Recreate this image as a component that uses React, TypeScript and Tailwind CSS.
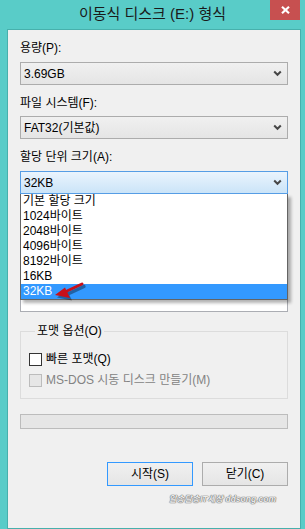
import React from 'react';

const font = { fontFamily: '"Liberation Sans", "Noto Sans CJK KR", sans-serif' };

const Chevron = () => (
  <svg width="9" height="7" viewBox="0 0 9 7" className="shrink-0">
    <path d="M1.2 1.5 L4.5 4.8 L7.8 1.5" fill="none" stroke="#474747" strokeWidth="2" />
  </svg>
);

const Combo = ({ value, focused }: { value: string; focused?: boolean }) => (
  <div
    className={`flex h-[23px] items-center justify-between border pl-[3px] pr-[5px] text-[12px] leading-[16px] ${
      focused
        ? 'border-[#569de5] bg-gradient-to-b from-[#eaf4fd] to-[#cbe4f8]'
        : 'border-[#acacac] bg-gradient-to-b from-[#f0f0f0] to-[#e5e5e5]'
    }`}
  >
    <span className="text-black">{value}</span>
    <Chevron />
  </div>
);

const options = ['기본 할당 크기', '1024바이트', '2048바이트', '4096바이트', '8192바이트', '16KB', '32KB'];

const App: React.FC = () => {
  return (
    <div className="flex h-[529px] w-[305px] flex-col overflow-hidden bg-[#59ccc8]" style={font}>
      {/* Title bar */}
      <div className="relative flex h-[29px] shrink-0 items-center justify-center">
        <span className="-mt-[1px] text-[15px] leading-[20px] text-[#1a1a1a]">이동식 디스크 (E:) 형식</span>
        <div className="absolute right-[5px] top-0 flex h-[20px] w-[30px] items-center justify-center bg-[#c75050]">
          <svg width="9" height="8" viewBox="0 0 9 8">
            <path d="M1 0.8 L8 7.2 M8 0.8 L1 7.2" stroke="white" strokeWidth="2.2" />
          </svg>
        </div>
      </div>

      {/* Client area */}
      <div className="ml-[7px] mr-[4px] flex flex-1 flex-col border border-[#47b0ac] bg-[#f0f0f0] px-[12px] pb-[7px] text-[12px] leading-[16px] text-black">
        <div className="mt-[10px]">용량(P):</div>
        <div className="mt-[6px]">
          <Combo value="3.69GB" />
        </div>

        <div className="mt-[10px]">파일 시스템(F):</div>
        <div className="mt-[5px]">
          <Combo value="FAT32(기본값)" />
        </div>

        <div className="mt-[10px]">할당 단위 크기(A):</div>
        <div className="relative z-10 mt-[6px]">
          <Combo value="32KB" focused />
          {/* Open list */}
          <div className="absolute left-0 right-0 top-full border border-t-0 border-[#646464] bg-white shadow-[3px_3px_3px_rgba(0,0,0,0.3)]">
            {options.map((o) => (
              <div
                key={o}
                className={`h-[15px] pl-[2px] leading-[15px] ${o === '32KB' ? 'bg-[#3399ff] text-white' : 'text-black'}`}
              >
                {o}
              </div>
            ))}
            <svg className="absolute left-[33px] top-[87px]" width="34" height="24" viewBox="0 0 34 24">
              <g transform="translate(2 2.5)" opacity="0.35">
                <path d="M13 10 L28 3" stroke="#000" strokeWidth="3.2" strokeLinecap="round" />
                <path d="M1 14 L11 6.5 L16 17 Z" fill="#000" />
              </g>
              <path d="M13 10 L28 3" stroke="#c8101a" strokeWidth="3" strokeLinecap="round" />
              <path d="M1 14 L11 6.5 L16 17 Z" fill="#c8101a" />
            </svg>
          </div>
        </div>

        {/* Volume label box, mostly hidden behind the list */}
        <div className="mt-[97px] h-[21px] border border-[#abadb3] bg-white" />

        {/* Format options */}
        <fieldset className="mt-[11px] border border-[#dcdcdc] pb-[10px] pl-[8px] pt-[12px]">
          <legend className="ml-[6px] px-[2px]">포맷 옵션(O)</legend>
          <div className="flex items-center gap-[4px]">
            <div className="h-[13px] w-[13px] border border-[#333] bg-white" />
            <span>빠른 포맷(Q)</span>
          </div>
          <div className="mt-[5px] flex items-center gap-[4px] text-[#838383]">
            <div className="h-[13px] w-[13px] border border-[#bcbcbc] bg-[#e6e6e6]" />
            <span>MS-DOS 시동 디스크 만들기(M)</span>
          </div>
        </fieldset>

        {/* Progress */}
        <div className="mt-[15px] h-[15px] border border-[#bcbcbc] bg-[#e6e6e6]" />

        {/* Buttons */}
        <div className="mt-[33px] flex justify-end gap-[9px]">
          <button className="flex h-[24px] w-[86px] items-center justify-center border border-[#3399ff] bg-gradient-to-b from-[#f0f0f0] to-[#e5e5e5]">
            시작(S)
          </button>
          <button className="flex h-[24px] w-[86px] items-center justify-center border border-[#acacac] bg-gradient-to-b from-[#f0f0f0] to-[#e5e5e5]">
            닫기(C)
          </button>
        </div>

        <div className="mt-[8px] flex justify-end pr-[12px]">
          <span className="text-[8.5px] font-bold italic leading-[10px] text-[#ececec] [text-shadow:0_0_1px_#6f6f6f,0_0_1px_#6f6f6f,0_0_1px_#6f6f6f]">
            알송달송IT세상 ddsong.com
          </span>
        </div>
      </div>
    </div>
  );
};

export default App;
